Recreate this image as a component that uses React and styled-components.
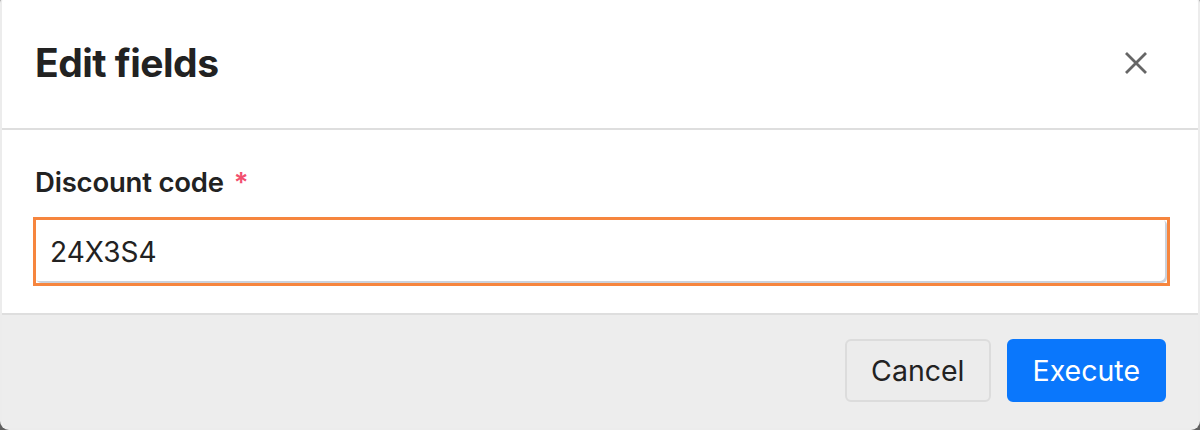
import React, { useState } from "react";
import styled, { createGlobalStyle } from "styled-components";

const GlobalStyle = createGlobalStyle`
  html, body {
    margin: 0;
    padding: 0;
    background: #5f5f5f;
    font-family: Inter, "Noto Sans", "Liberation Sans", sans-serif;
    -webkit-font-smoothing: antialiased;
  }
  * { box-sizing: border-box; }
`;

const Dialog = styled.div`
  width: 1200px;
  height: 436px;
  margin-top: -6px;
  background: #ffffff;
  border: 2px solid #ececec;
  border-top: none;
  border-radius: 9px;
  overflow: hidden;
  display: flex;
  flex-direction: column;
`;

const Header = styled.header`
  height: 136px;
  padding: 2px 33px 0 33px;
  display: flex;
  align-items: center;
  justify-content: space-between;
  border-bottom: 2px solid #dedede;
`;

const Title = styled.h2`
  margin: 0;
  font-size: 39px;
  font-weight: 700;
  letter-spacing: -0.5px;
  color: #222222;
`;

const CloseButton = styled.button`
  width: 40px;
  height: 40px;
  margin-right: 9px;
  margin-top: 2px;
  border: none;
  background: transparent;
  padding: 0;
  display: flex;
  align-items: center;
  justify-content: center;
  cursor: pointer;
`;

const Body = styled.div`
  height: 185px;
  padding: 35px 28px 0 33px;
  display: flex;
  flex-direction: column;
  border-bottom: 2px solid #dedede;
`;

const Label = styled.label`
  font-size: 27.5px;
  font-weight: 600;
  color: #222222;
  letter-spacing: -0.2px;
  margin-bottom: 18px;
`;

const Required = styled.span`
  color: #f2506f;
  margin-left: 10px;
`;

const FieldFrame = styled.div`
  width: 1137px;
  height: 69px;
  margin-left: -2px;
  border: 3px solid #f6853e;
  background: #ffffff;
`;

const Field = styled.input`
  display: block;
  width: 100%;
  height: 100%;
  border: none;
  border-radius: 5px;
  outline: none;
  box-shadow: inset -2px -2px 0 #cbd1db;
  padding: 0 14px;
  font-family: Inter, "Noto Sans", sans-serif;
  font-size: 28px;
  color: #222222;
  background: #ffffff;
`;

const Footer = styled.footer`
  flex: 1;
  background: #ededed;
  display: flex;
  justify-content: flex-end;
  align-items: flex-start;
  gap: 16px;
  padding: 24px 32px 0 0;
`;

const Button = styled.button`
  height: 63px;
  padding: 0 24px;
  min-width: ${(p) => (p.$primary ? "159px" : "144px")};
  border-radius: 6px;
  border: 2px solid ${(p) => (p.$primary ? "#0a77fc" : "#dcdcdc")};
  background: ${(p) => (p.$primary ? "#0a77fc" : "#ececec")};
  color: ${(p) => (p.$primary ? "#ffffff" : "#222222")};
  font-family: Inter, "Noto Sans", sans-serif;
  font-size: 28.5px;
  font-weight: 400;
  cursor: pointer;
`;

function CloseIcon() {
  return (
    <svg width="24" height="24" viewBox="0 0 24 24">
      <path
        d="M2 2 L22 22 M22 2 L2 22"
        stroke="#666666"
        strokeWidth="2.8"
        strokeLinecap="butt"
        fill="none"
      />
    </svg>
  );
}

export default function App() {
  const [code, setCode] = useState("24X3S4");

  return (
    <>
      <GlobalStyle />
      <Dialog role="dialog">
        <Header>
          <Title>Edit fields</Title>
          <CloseButton aria-label="Close">
            <CloseIcon />
          </CloseButton>
        </Header>
        <Body>
          <Label htmlFor="discount">
            Discount code<Required>*</Required>
          </Label>
          <FieldFrame>
            <Field
              id="discount"
              value={code}
              onChange={(e) => setCode(e.target.value)}
            />
          </FieldFrame>
        </Body>
        <Footer>
          <Button>Cancel</Button>
          <Button $primary>Execute</Button>
        </Footer>
      </Dialog>
    </>
  );
}
